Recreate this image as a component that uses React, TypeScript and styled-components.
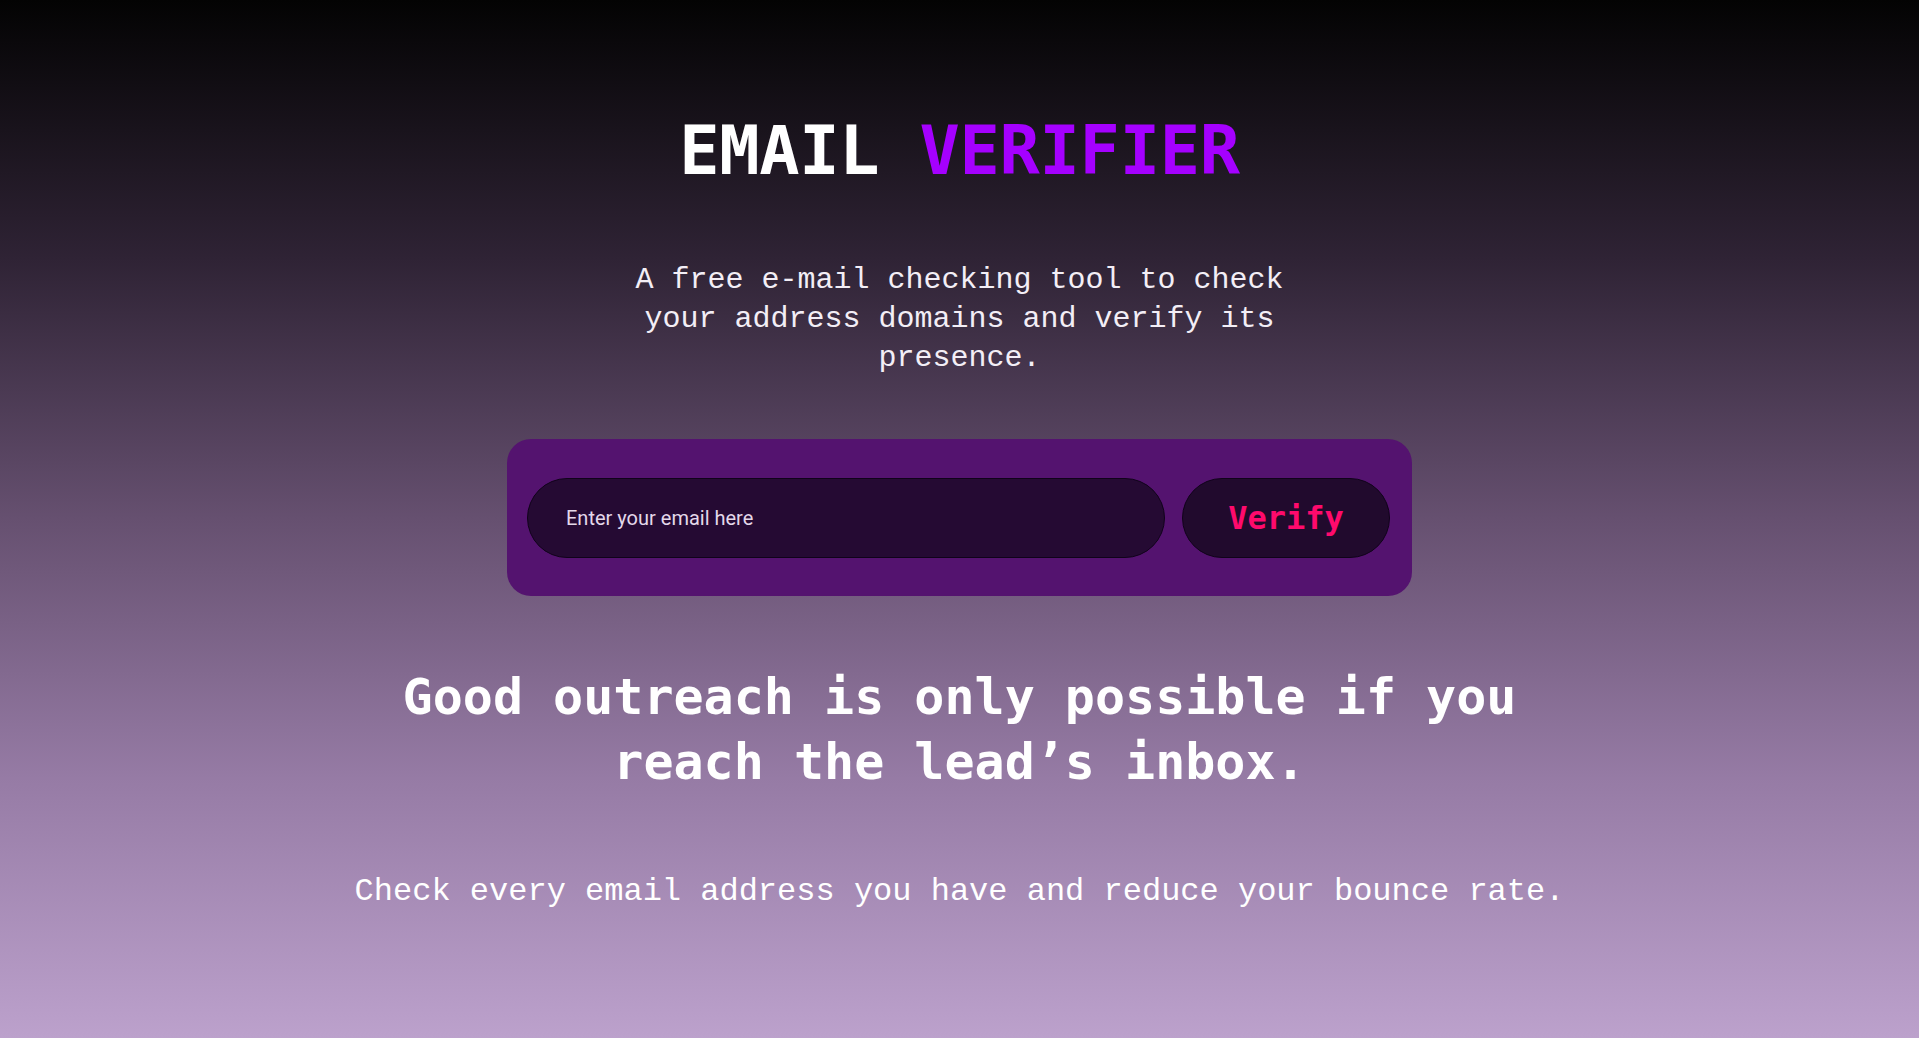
import React from "react";
import styled, { createGlobalStyle } from "styled-components";

const GlobalStyle = createGlobalStyle`
  html, body { margin: 0; padding: 0; }
  body {
    min-height: 100vh;
    background: linear-gradient(to bottom, #030303 0%, #2f2335 25%, #665070 50%, #967ba5 75%, #bca1cc 100%);
    background-attachment: fixed;
  }
  * { box-sizing: border-box; }
`;

const Page = styled.main`
  min-height: 100vh;
  display: flex;
  flex-direction: column;
  align-items: center;
  padding-top: 111px;
  color: #ffffff;
  text-align: center;
`;

const Title = styled.h1`
  margin: 0;
  font-family: "DejaVu Sans Mono", "Liberation Mono", monospace;
  font-weight: 700;
  font-size: 67px;
  line-height: 80px;
  letter-spacing: -0.3px;
  color: #ffffff;
`;

const Accent = styled.span`
  color: #a500ff;
`;

const Subtitle = styled.p`
  margin: 70px 0 0;
  max-width: 680px;
  font-family: "Liberation Mono", "DejaVu Sans Mono", monospace;
  font-weight: 400;
  font-size: 30px;
  line-height: 39px;
  color: #f3eef6;
`;

const FormCard = styled.form`
  margin-top: 61px;
  width: 905px;
  height: 157px;
  display: flex;
  align-items: center;
  gap: 17px;
  padding: 0 22px 0 20px;
  border-radius: 24px;
  background: #54136f;
`;

const EmailInput = styled.input`
  flex: 1;
  height: 80px;
  border-radius: 40px;
  border: 1px solid #10031a;
  background: #250a33;
  padding: 0 38px;
  font-family: "Roboto", "Liberation Sans", sans-serif;
  font-size: 20px;
  color: #ffffff;
  outline: none;
  &::placeholder { color: #e4d8ea; }
`;

const VerifyButton = styled.button`
  width: 208px;
  height: 80px;
  border-radius: 40px;
  border: 1px solid #10031a;
  background: #210a2d;
  color: #ff0a6c;
  font-family: "DejaVu Sans Mono", "Liberation Mono", monospace;
  font-weight: 700;
  font-size: 32px;
  cursor: pointer;
`;

const Headline = styled.h2`
  margin: 69px 0 0;
  max-width: 1180px;
  font-family: "DejaVu Sans Mono", "Liberation Mono", monospace;
  font-weight: 700;
  font-size: 50px;
  line-height: 65px;
  color: #ffffff;
`;

const Tagline = styled.p`
  margin: 77px 0 0;
  font-family: "Liberation Mono", "DejaVu Sans Mono", monospace;
  font-weight: 400;
  font-size: 32px;
  line-height: 40px;
  color: #ffffff;
`;

export default function App() {
  return (
    <>
      <GlobalStyle />
      <Page>
        <Title>
          EMAIL <Accent>VERIFIER</Accent>
        </Title>
        <Subtitle>
          A free e-mail checking tool to check your address domains and verify its presence.
        </Subtitle>
        <FormCard onSubmit={(e) => e.preventDefault()}>
          <EmailInput type="email" placeholder="Enter your email here" />
          <VerifyButton type="submit">Verify</VerifyButton>
        </FormCard>
        <Headline>Good outreach is only possible if you reach the lead’s inbox.</Headline>
        <Tagline>Check every email address you have and reduce your bounce rate.</Tagline>
      </Page>
    </>
  );
}
